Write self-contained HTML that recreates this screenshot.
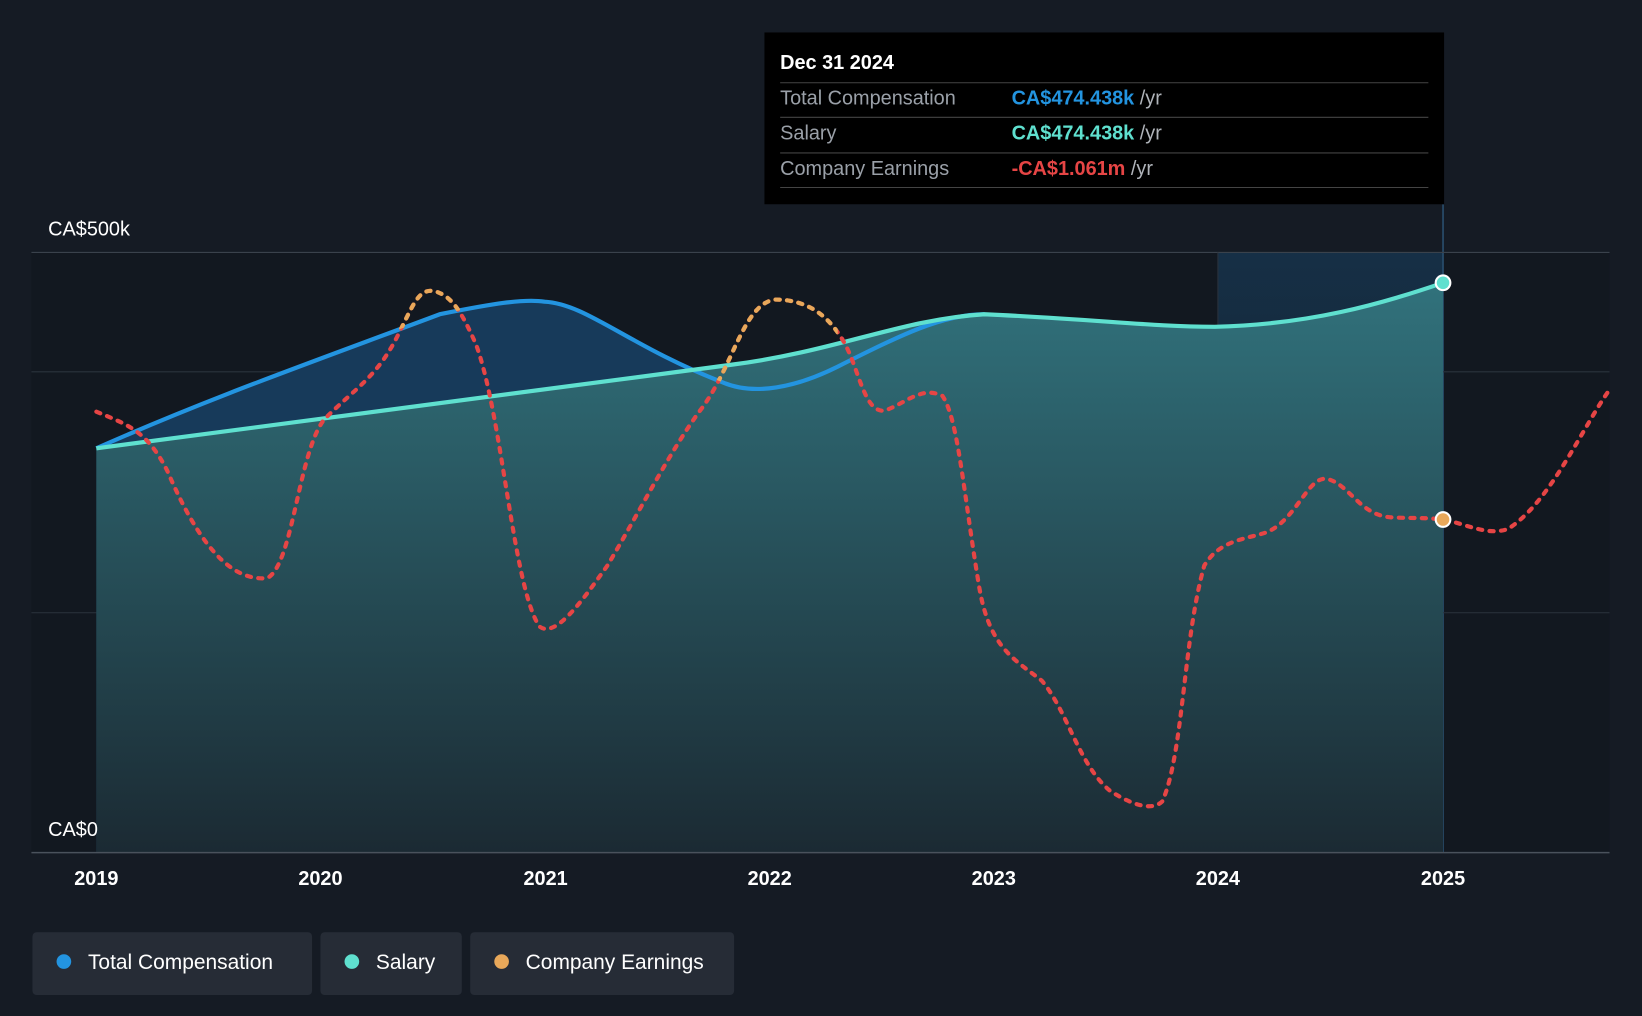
<!DOCTYPE html>
<html><head><meta charset="utf-8"><style>
html,body{margin:0;padding:0;background:#151b24;}
body{width:1642px;height:1016px;overflow:hidden;font-family:"Liberation Sans",Arial,sans-serif;}
svg{display:block}
</style></head><body>
<svg width="1642" height="1016" viewBox="0 0 1568 970" preserveAspectRatio="none" xmlns="http://www.w3.org/2000/svg" font-family="Liberation Sans, Arial, sans-serif">
<defs>
<linearGradient id="ga" x1="0" y1="0" x2="0" y2="1">
<stop offset="0" stop-color="#31727c"/><stop offset="1" stop-color="#1b2a33"/></linearGradient>
<linearGradient id="gh" x1="0" y1="0" x2="0" y2="1">
<stop offset="0" stop-color="#16324a" stop-opacity="0.9"/><stop offset="1" stop-color="#152535" stop-opacity="0.3"/></linearGradient>
<clipPath id="above"><path d="M92,428 C200,380 300,345 420,300 C470,290 500,285 520,288 C560,290 600,330 690,365 C720,378 760,370 800,350 C860,320 900,300 940,300 C1050,305 1100,312 1160,312 C1250,310 1320,290 1378,270 L1378,0 L92,0 Z"/></clipPath>
<clipPath id="xr"><rect x="350" y="0" width="450" height="970"/></clipPath>
</defs>
<rect width="1568" height="970" fill="#151b24"/>
<rect x="30" y="241" width="1507" height="573" fill="#121820"/>
<rect x="1163" y="241" width="215" height="573" fill="url(#gh)"/>
<line x1="1378" y1="195" x2="1378" y2="814" stroke="#2a5070" stroke-width="1.5"/>
<line x1="30" y1="241" x2="1537" y2="241" stroke="#3a424c"/>
<line x1="30" y1="355" x2="1537" y2="355" stroke="#2a323c"/>
<line x1="30" y1="585" x2="1537" y2="585" stroke="#2a323c"/>
<line x1="1163" y1="241" x2="1163" y2="814" stroke="#2a323c"/>
<path d="M92,428 C200,380 300,345 420,300 C470,290 500,285 520,288 C560,290 600,330 690,365 C720,378 760,370 800,350 C860,320 900,300 940,300 C1050,305 1100,312 1160,312 C1250,310 1320,290 1378,270 L1378,814 L92,814 Z" fill="#173a5a"/>
<path d="M92,428 C300,400 500,375 700,348 C800,335 860,305 940,300 C1050,305 1100,312 1160,312 C1250,310 1320,290 1378,270 L1378,814 L92,814 Z" fill="url(#ga)"/>
<path d="M92,428 C200,380 300,345 420,300 C470,290 500,285 520,288 C560,290 600,330 690,365 C720,378 760,370 800,350 C860,320 900,300 940,300" fill="none" stroke="#2394e0" stroke-width="4"/>
<path d="M92,428 C300,400 500,375 700,348 C800,335 860,305 940,300 C1050,305 1100,312 1160,312 C1250,310 1320,290 1378,270" fill="none" stroke="#5fe0cf" stroke-width="4"/>
<line x1="30" y1="814" x2="1537" y2="814" stroke="#4a525c" stroke-width="1.5"/>
<path d="M92,393 C120,405 140,410 160,450 C190,520 220,555 255,552 C280,540 285,430 310,400 C340,370 360,360 380,320 C395,290 400,275 415,278 C430,282 440,295 455,330 C480,400 490,560 515,598 C530,610 555,575 580,540 C610,490 640,430 670,390 C700,350 710,290 740,286 C770,286 790,300 805,325 C820,350 825,395 845,392 C865,385 880,368 900,378 C915,400 920,470 935,560 C945,620 970,630 995,650 C1020,680 1030,730 1060,755 C1080,768 1100,775 1110,765 C1130,720 1130,610 1150,540 C1165,515 1190,515 1210,508 C1240,495 1250,450 1270,458 C1290,465 1300,493 1330,494 C1350,495 1360,494 1378,496 C1400,500 1420,512 1440,505 C1480,480 1510,410 1537,372" fill="none" stroke="#e64545" stroke-width="4" stroke-dasharray="4 7" stroke-linecap="round"/>
<g clip-path="url(#xr)">
<path d="M92,393 C120,405 140,410 160,450 C190,520 220,555 255,552 C280,540 285,430 310,400 C340,370 360,360 380,320 C395,290 400,275 415,278 C430,282 440,295 455,330 C480,400 490,560 515,598 C530,610 555,575 580,540 C610,490 640,430 670,390 C700,350 710,290 740,286 C770,286 790,300 805,325 C820,350 825,395 845,392" fill="none" stroke="#e8a85a" stroke-width="4" stroke-dasharray="4 7" stroke-linecap="round" clip-path="url(#above)"/>
</g>
<circle cx="1378" cy="270" r="7" fill="#5fe0cf" stroke="#fff" stroke-width="2"/>
<circle cx="1378" cy="496" r="7" fill="#e8a85a" stroke="#fff" stroke-width="2"/>
<text x="46" y="225" fill="#fff" font-size="19">CA$500k</text>
<text x="46" y="798" fill="#fff" font-size="19">CA$0</text>
<g fill="#fff" font-size="19" text-anchor="middle" font-weight="bold">
<text x="92" y="845">2019</text><text x="306" y="845">2020</text><text x="521" y="845">2021</text><text x="735" y="845">2022</text><text x="949" y="845">2023</text><text x="1163" y="845">2024</text><text x="1378" y="845">2025</text></g>
<rect x="730" y="31" width="649" height="164" fill="#000"/>
<text x="745" y="66" fill="#fff" font-size="19" font-weight="bold">Dec 31 2024</text>
<line x1="745" y1="79" x2="1364" y2="79" stroke="#444"/>
<line x1="745" y1="112" x2="1364" y2="112" stroke="#444"/>
<line x1="745" y1="146" x2="1364" y2="146" stroke="#444"/>
<line x1="745" y1="179" x2="1364" y2="179" stroke="#444"/>
<g font-size="19">
<text x="745" y="100" fill="#9aa0a8">Total Compensation</text>
<text x="966" y="100" fill="#2394e0" font-weight="bold">CA$474.438k <tspan fill="#b0b4ba" font-weight="normal">/yr</tspan></text>
<text x="745" y="133" fill="#9aa0a8">Salary</text>
<text x="966" y="133" fill="#5fe0cf" font-weight="bold">CA$474.438k <tspan fill="#b0b4ba" font-weight="normal">/yr</tspan></text>
<text x="745" y="167" fill="#9aa0a8">Company Earnings</text>
<text x="966" y="167" fill="#e64545" font-weight="bold">-CA$1.061m <tspan fill="#b0b4ba" font-weight="normal">/yr</tspan></text>
</g>
<rect x="31" y="890" width="267" height="60" rx="4" fill="#262c36"/>
<circle cx="61" cy="918" r="7" fill="#2394e0"/>
<text x="84" y="925" fill="#fff" font-size="20">Total Compensation</text>
<rect x="306" y="890" width="135" height="60" rx="4" fill="#262c36"/>
<circle cx="336" cy="918" r="7" fill="#5fe0cf"/>
<text x="359" y="925" fill="#fff" font-size="20">Salary</text>
<rect x="449" y="890" width="252" height="60" rx="4" fill="#262c36"/>
<circle cx="479" cy="918" r="7" fill="#e8a85a"/>
<text x="502" y="925" fill="#fff" font-size="20">Company Earnings</text>
</svg>
</body></html>
